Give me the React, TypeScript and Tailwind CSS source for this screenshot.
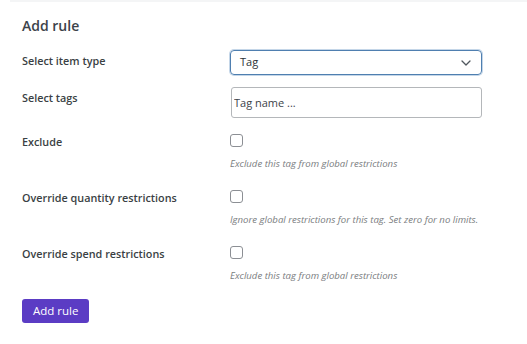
import React from 'react';

const font = { fontFamily: '"Open Sans", "Noto Sans", sans-serif' };

const labelCls = 'w-[208px] shrink-0 text-[10.8px] leading-[16px] font-semibold text-[#3a3f44]';

const Hint: React.FC<{ children: React.ReactNode }> = ({ children }) => (
  <p className="mt-[10px] text-[9.6px] leading-[13px] italic whitespace-nowrap text-[#7a7d80]">{children}</p>
);

const CheckRow: React.FC<{ label: string; hint: string }> = ({ label, hint }) => (
  <div className="flex">
    <label className={labelCls}>{label}</label>
    <div>
      <input
        type="checkbox"
        className="appearance-none block w-[13px] h-[13px] border border-[#8c8f94] rounded-[3px] bg-white"
      />
      <Hint>{hint}</Hint>
    </div>
  </div>
);

export default function App() {
  return (
    <div className="w-[527px] h-[344px] bg-white" style={font}>
      <div className="ml-[10px] h-[2px] bg-[#f4f5f6]" />
      <div className="pl-[22px] pr-[45px]">
        <h2 className="mt-[13px] text-[14px] leading-[22px] font-semibold text-[#3c434a]">Add rule</h2>

        <div className="flex mt-[13px]">
          <label className={`${labelCls} pt-[3px]`}>Select item type</label>
          <div className="relative flex-1">
            <div className="h-[25px] flex items-center justify-between pl-[9px] pr-[10px] border border-[#4f7fb0] rounded-[4px] shadow-[0_0_0_1px_#c4d6e8] text-[11px] text-[#2c3338]">
              <span>Tag</span>
              <svg width="10" height="6" viewBox="0 0 10 6" fill="none">
                <path d="M1 1l4 4 4-4" stroke="#50575e" strokeWidth="1.3" strokeLinecap="round" strokeLinejoin="round" />
              </svg>
            </div>
          </div>
        </div>

        <div className="flex mt-[12px]">
          <label className={`${labelCls} pt-[3px] w-[209px]`}>Select tags</label>
          <input
            type="text"
            placeholder="Tag name ..."
            className="flex-1 h-[31px] px-[2px] border border-[#b4b7ba] rounded-[3px] text-[11px] text-[#2c3338] placeholder:text-[#3c434a] outline-none"
          />
        </div>

        <div className="flex flex-col gap-[20px] mt-[16px]">
          <CheckRow label="Exclude" hint="Exclude this tag from global restrictions" />
          <CheckRow label="Override quantity restrictions" hint="Ignore global restrictions for this tag. Set zero for no limits." />
          <CheckRow label="Override spend restrictions" hint="Exclude this tag from global restrictions" />
        </div>

        <button className="mt-[17px] h-[24px] px-[11px] bg-[#5b3cc4] text-white text-[11.5px] font-medium rounded-[3px]">
          Add rule
        </button>
      </div>
    </div>
  );
}
